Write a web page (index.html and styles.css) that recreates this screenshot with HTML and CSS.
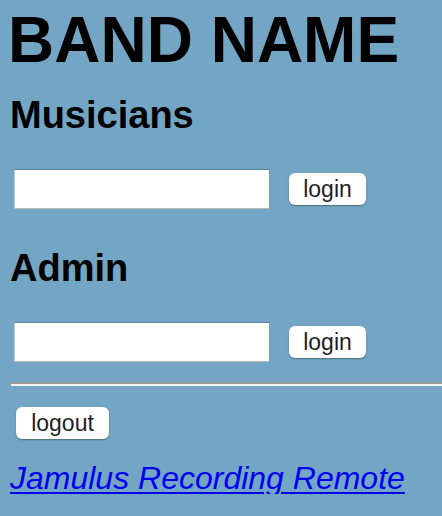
FILE: index.html
```html
<!DOCTYPE html>
<html lang="en">
<head>
<meta charset="utf-8">
<title>BAND NAME</title>
<link rel="stylesheet" href="styles.css">
</head>
<body>
  <main class="page">
    <h1 class="title">BAND NAME</h1>
    <h2 class="section">Musicians</h2>
    <form class="login-row">
      <input class="field" type="password">
      <button class="btn btn-login" type="button">login</button>
    </form>
    <h2 class="section section-admin">Admin</h2>
    <form class="login-row login-row-admin">
      <input class="field" type="password">
      <button class="btn btn-login" type="button">login</button>
    </form>
    <hr class="rule">
    <button class="btn btn-logout" type="button">logout</button>
    <p class="footer"><a class="footer-link" href="#">Jamulus Recording Remote</a></p>
  </main>
</body>
</html>
```

FILE: styles.css
```css
html, body {
  margin: 0;
  padding: 0;
  background: #72a6c4;
}

body {
  overflow: hidden;
  font-family: "Liberation Sans", Arial, sans-serif;
  color: #000;
}

.page {
  display: flex;
  flex-direction: column;
  align-items: flex-start;
  padding: 8px 0 0 10px;
}

.title {
  margin: 0 0 0 -2px;
  font-size: 64px;
  line-height: 64px;
  font-weight: bold;
}

.section {
  margin: 24px 0 0 0;
  font-size: 38px;
  line-height: 38px;
  font-weight: bold;
}

.section-admin {
  margin-top: 40px;
}

.login-row {
  display: flex;
  align-items: center;
  gap: 19px;
  margin: 35px 0 0 4px;
}

.login-row-admin {
  margin-top: 35px;
}

.field {
  box-sizing: border-box;
  width: 256px;
  height: 40px;
  margin: 0;
  padding: 2px 6px;
  background: #fff;
  border-style: solid;
  border-width: 1px;
  border-color: #55839f #6e9bb5 #b8b8b8 #c4c4c4;
  font-size: 20px;
}

.btn {
  box-sizing: border-box;
  height: 32px;
  margin: 0;
  padding: 0;
  background: #fff;
  border: none;
  border-radius: 6px;
  box-shadow: 0 1px 1.5px rgba(0, 0, 0, 0.35);
  font-family: "Liberation Sans", Arial, sans-serif;
  font-size: 23px;
  line-height: 32px;
  color: #1f1f1f;
  text-align: center;
}

.btn-login {
  width: 77px;
}

.rule {
  align-self: stretch;
  box-sizing: border-box;
  height: 4px;
  margin: 20px 0 0 1px;
  border: none;
  border-top: 2px solid #9a9a9a;
  border-bottom: 2px solid #f2f2f2;
}

.btn-logout {
  width: 93px;
  margin: 21px 0 0 6px;
}

.footer {
  margin: 23px 0 0 0;
  font-size: 32px;
  line-height: 32px;
}

.footer-link {
  color: #0000ee;
  font-style: italic;
  text-decoration: underline;
  text-decoration-thickness: 2px;
  text-underline-offset: 3px;
}
```
